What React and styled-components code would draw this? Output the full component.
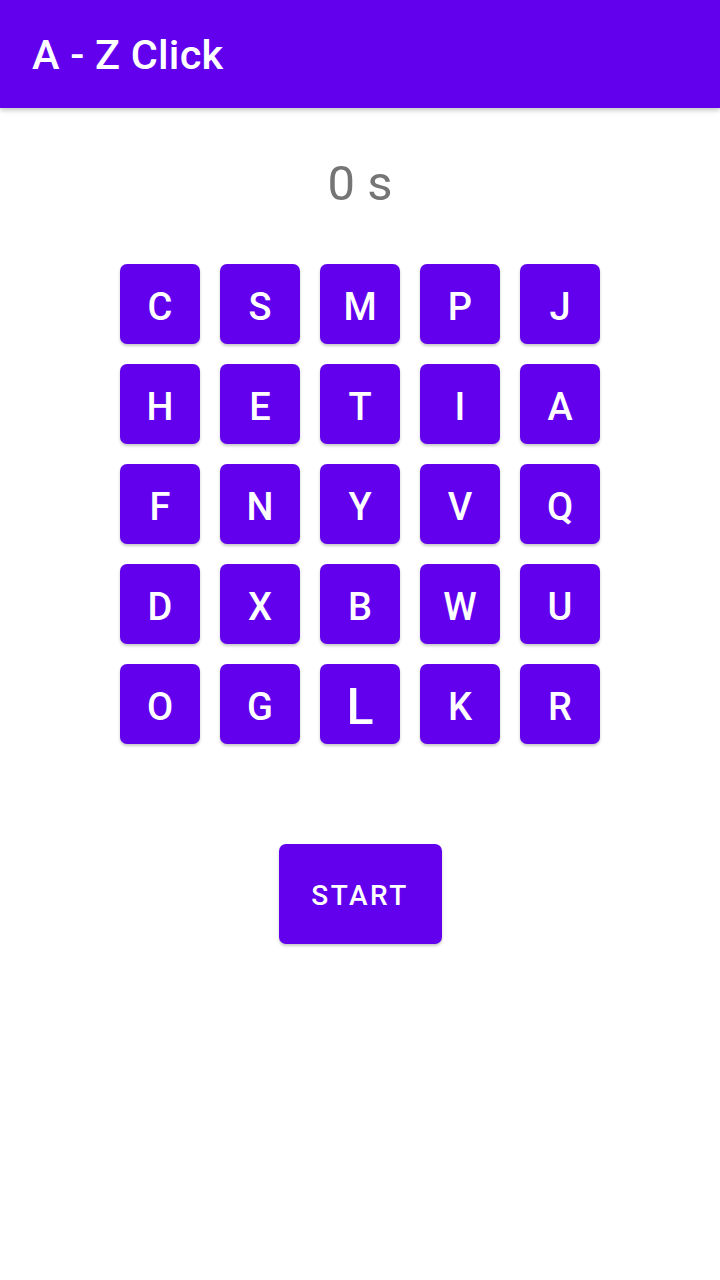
import styled, { createGlobalStyle } from 'styled-components';

const GlobalStyle = createGlobalStyle`
  html, body {
    margin: 0;
    padding: 0;
    background: #fff;
  }
  body {
    font-family: Roboto, "Noto Sans", sans-serif;
  }
`;

const letters = [
  'C', 'S', 'M', 'P', 'J',
  'H', 'E', 'T', 'I', 'A',
  'F', 'N', 'Y', 'V', 'Q',
  'D', 'X', 'B', 'W', 'U',
  'O', 'G', 'L', 'K', 'R',
];

export default function App() {
  return (
    <>
      <GlobalStyle />
      <Page>
        <AppBar>
          <Title>A - Z Click</Title>
        </AppBar>
        <Content>
          <Timer>0 s</Timer>
          <Grid>
            {letters.map((l) => (
              <LetterButton key={l} $big={l === 'L'}>
                {l}
              </LetterButton>
            ))}
          </Grid>
          <StartButton>START</StartButton>
        </Content>
      </Page>
    </>
  );
}

const Page = styled.div`
  width: 720px;
  min-height: 1280px;
  background: #fff;
`;

const AppBar = styled.header`
  height: 108px;
  background: #6200ee;
  display: flex;
  align-items: center;
  padding: 0 32px;
  box-sizing: border-box;
  box-shadow: 0 2px 5px rgba(0, 0, 0, 0.25);
  position: relative;
  z-index: 1;
`;

const Title = styled.h1`
  margin: 0;
  color: #fff;
  font-size: 41.5px;
  font-weight: 500;
  letter-spacing: 0.2px;
`;

const Content = styled.main`
  display: flex;
  flex-direction: column;
  align-items: center;
`;

const Timer = styled.div`
  margin-top: 44px;
  height: 64px;
  line-height: 64px;
  font-size: 49px;
  color: #757575;
`;

const Grid = styled.div`
  margin-top: 48px;
  display: grid;
  grid-template-columns: repeat(5, 80px);
  grid-auto-rows: 80px;
  gap: 20px;
`;

const LetterButton = styled.button`
  border: none;
  border-radius: 7px;
  background: #6200ee;
  color: #fff;
  font-family: Roboto, sans-serif;
  font-weight: 500;
  font-size: ${(p) => (p.$big ? '50px' : '38px')};
  padding: 5px 0 0;
  box-shadow: 0 2px 3px rgba(0, 0, 0, 0.22);
  display: flex;
  align-items: center;
  justify-content: center;
`;

const StartButton = styled.button`
  margin-top: 100px;
  width: 163px;
  height: 100px;
  border: none;
  border-radius: 7px;
  background: #6200ee;
  color: #fff;
  font-family: Roboto, sans-serif;
  font-weight: 500;
  font-size: 28px;
  letter-spacing: 2.5px;
  padding: 2px 0 0;
  box-shadow: 0 2px 3px rgba(0, 0, 0, 0.22);
`;
